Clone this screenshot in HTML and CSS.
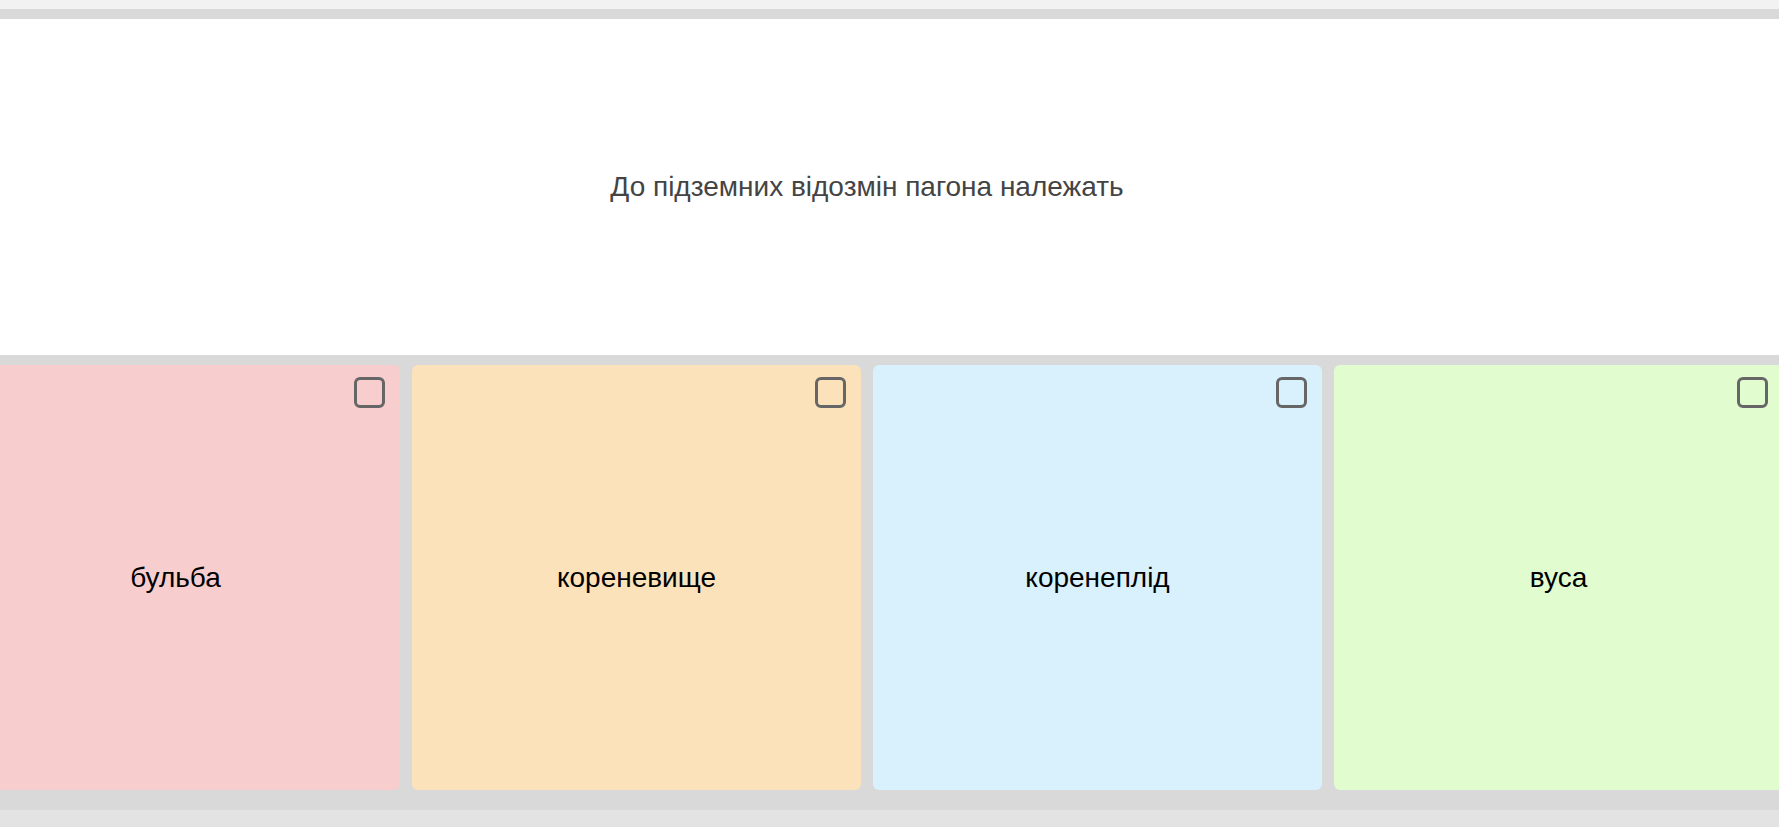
FILE: index.html
```html
<!DOCTYPE html>
<html lang="uk">
<head>
<meta charset="utf-8">
<title>Питання</title>
<link rel="stylesheet" href="styles.css">
</head>
<body>
<div class="topband"></div>
<div class="panel">
  <div class="stage">
    <div class="question">До підземних відозмін пагона належать</div>
    <div class="answers">
      <div class="card pink"><span class="check"></span><span class="label">бульба</span></div>
      <div class="card orange"><span class="check"></span><span class="label">кореневище</span></div>
      <div class="card blue"><span class="check"></span><span class="label">коренеплід</span></div>
      <div class="card green"><span class="check"></span><span class="label">вуса</span></div>
    </div>
  </div>
</div>
<div class="footer"></div>
</body>
</html>
```
FILE: styles.css
```css
html, body {
  margin: 0;
  padding: 0;
  height: 100%;
}
body {
  background: #e3e3e3;
  overflow: hidden;
  font-family: "Liberation Sans", Arial, sans-serif;
}
.topband {
  height: 9px;
  background: #f2f2f2;
}
.panel {
  background: #d9d9d9;
  padding: 10px 0 20px;
  overflow: hidden;
}
.stage {
  width: 1832px;
  margin-left: -49px;
  display: flex;
  flex-direction: column;
  gap: 10px;
}
.question {
  height: 336px;
  background: #ffffff;
  display: flex;
  align-items: center;
  justify-content: center;
  color: #444444;
  font-size: 28px;
}
.answers {
  display: grid;
  grid-template-columns: repeat(4, 1fr);
  column-gap: 12px;
  height: 425px;
}
.card {
  position: relative;
  border-radius: 6px;
  display: flex;
  align-items: center;
  justify-content: center;
  color: #000000;
  font-size: 28px;
}
.pink { background: #f7cdce; }
.orange { background: #fce2ba; }
.blue { background: #d8f1fc; }
.green { background: #e1fdd0; }
.check {
  position: absolute;
  top: 12px;
  right: 15px;
  width: 25px;
  height: 25px;
  border: 3px solid #666666;
  border-radius: 6px;
}
.label {
  display: block;
}
```
